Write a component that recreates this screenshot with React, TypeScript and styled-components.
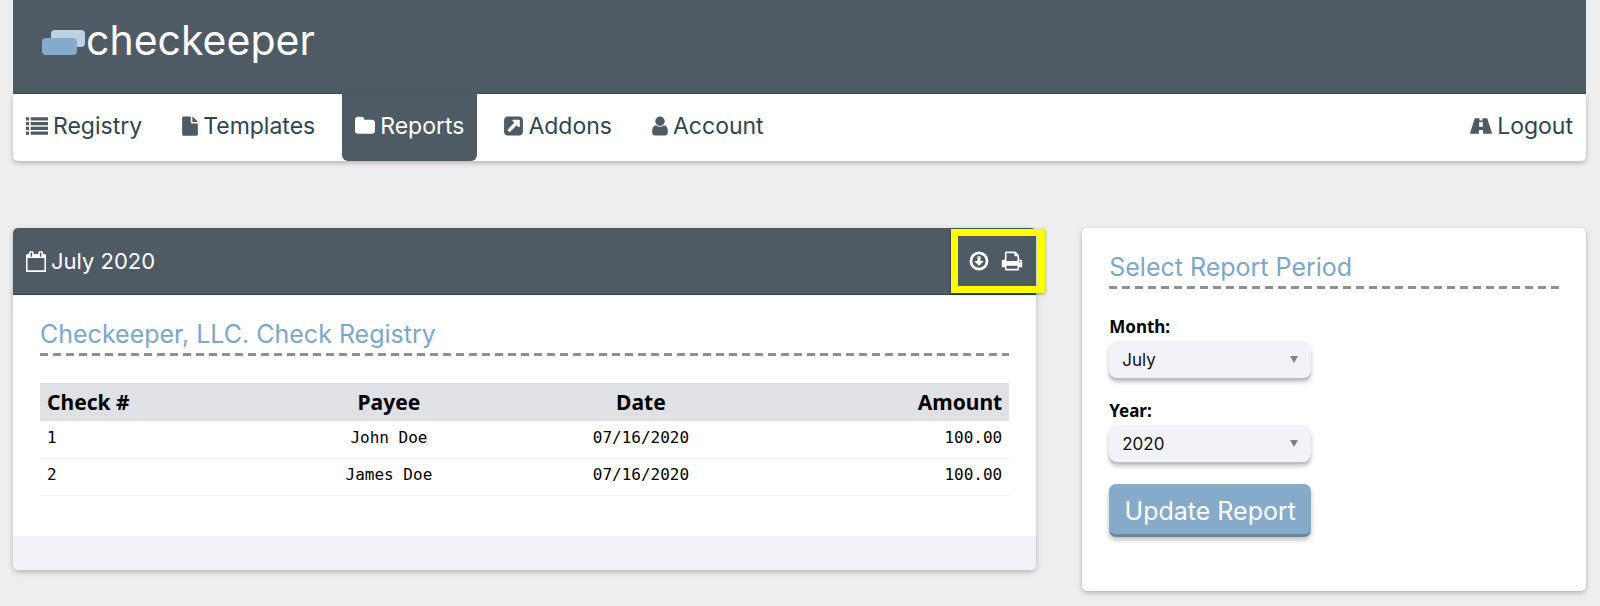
import React, { useState } from "react";
import styled, { createGlobalStyle } from "styled-components";

const slate = "#4e5a64";
const ink = "#2f4454";
const blue = "#86abca";
const display = `Inter, "Open Sans", sans-serif`;

const GlobalStyle = createGlobalStyle`
  *, *::before, *::after { box-sizing: border-box; }
  body {
    margin: 0;
    background: #eeeeee;
    color: #000;
    font-family: "Noto Sans", sans-serif;
  }
`;

const Page = styled.div`
  padding: 0 14px 12px 13px;
`;

const Masthead = styled.header`
  display: flex;
  align-items: center;
  height: 94px;
  padding: 0 29px 14px;
  background: ${slate};
  border-bottom: 1px solid #3b4d5b;
`;

const Brand = styled.a`
  display: flex;
  align-items: center;
  gap: 1px;
  color: #fff;
  font: 400 41px/52px ${display};
  text-decoration: none;

  svg { margin-top: 6px; }
`;

const Nav = styled.nav`
  display: flex;
  justify-content: space-between;
  height: 67px;
  background: #fff;
  border-radius: 0 0 5px 5px;
  box-shadow: 0 2px 5px rgba(0, 0, 0, 0.25);
`;

const NavGroup = styled.div`
  display: flex;
  gap: 14px;
`;

const NavLink = styled.a<{ $active?: boolean }>`
  display: flex;
  align-items: center;
  gap: 5px;
  padding: ${(p) => (p.$active ? "1px 13px 4px" : "0 13px 4px")};
  margin-top: ${(p) => (p.$active ? "-1px" : "0")};
  color: ${(p) => (p.$active ? "#fff" : ink)};
  background: ${(p) => (p.$active ? slate : "transparent")};
  border-radius: 0 0 6px 6px;
  font: 400 23px/28px ${display};
  text-decoration: none;

  svg { color: ${(p) => (p.$active ? "#fff" : slate)}; }
`;

const Columns = styled.main`
  display: grid;
  grid-template-columns: 65fr 32fr;
  column-gap: 46px;
  align-items: start;
  margin-top: 67px;
`;

const Card = styled.section`
  background: #fff;
  border-radius: 5px;
  box-shadow: 0 2px 5px rgba(0, 0, 0, 0.25);
`;

const CardHeader = styled.div`
  position: relative;
  display: flex;
  align-items: center;
  justify-content: space-between;
  height: 67px;
  padding: 0 13px;
  color: #fff;
  background: ${slate};
  border-bottom: 1px solid #2b4355;
  border-radius: 5px 5px 0 0;
`;

const CardTitle = styled.h1`
  display: flex;
  align-items: center;
  gap: 5px;
  margin: 0;
  font: 400 22px/28px ${display};
`;

const Actions = styled.div`
  display: flex;
  gap: 11px;
`;

const IconButton = styled.button`
  display: flex;
  padding: 0;
  border: 0;
  background: none;
  color: #fff;
  cursor: pointer;
`;

const Highlight = styled.div`
  position: absolute;
  top: 1px;
  right: -9px;
  width: 94px;
  height: 64px;
  border: 7px solid #ffff00;
  box-shadow: 0 1px 3px rgba(0, 0, 0, 0.4);
  pointer-events: none;
`;

const CardBody = styled.div<{ $end?: number }>`
  padding: 24px 27px ${(p) => p.$end ?? 40}px;
`;

const SectionTitle = styled.h2`
  margin: 0 0 27px;
  padding-bottom: 7px;
  color: #7ba7cb;
  font: 400 25px/30px ${display};
  background: repeating-linear-gradient(90deg, #8f8f8f 0 8px, transparent 8px 13px) bottom / 100% 3px no-repeat;
`;

const Table = styled.table`
  width: 100%;
  table-layout: fixed;
  border-collapse: collapse;
`;

const HeadCell = styled.th<{ $align: string }>`
  height: 38px;
  padding: 0 7px;
  background: #e0e1e5;
  font: 700 21px/28px "Noto Sans", sans-serif;
  text-align: ${(p) => p.$align};
`;

const Cell = styled.td<{ $align: string }>`
  height: 37px;
  padding: 0 7px 3px;
  border-bottom: 1px solid #eef0f3;
  font: 400 16px/20px "DejaVu Sans Mono", monospace;
  text-align: ${(p) => p.$align};
`;

const CardFooter = styled.div`
  height: 34px;
  background: #f2f3f8;
  border-radius: 0 0 5px 5px;
`;

const Form = styled.form`
  display: flex;
  flex-direction: column;
  align-items: flex-start;
`;

const Field = styled.div`
  display: flex;
  flex-direction: column;
  gap: 4px;
  width: 202px;
  margin-bottom: 22px;
`;

const Label = styled.label`
  font: 700 17px/21px "Noto Sans", sans-serif;
`;

const SelectBox = styled.div`
  display: grid;
  align-items: center;

  > * { grid-area: 1 / 1; }
  svg { justify-self: end; margin-right: 13px; pointer-events: none; }
`;

const Select = styled.select`
  appearance: none;
  width: 100%;
  height: 37px;
  padding: 0 13px;
  border: 0;
  border-radius: 8px;
  background: #f2f3f8;
  color: #111;
  box-shadow: 0 2px 0 #bdbfc2, 0 4px 4px rgba(0, 0, 0, 0.25);
  font: 400 17px/24px ${display};
`;

const SubmitButton = styled.button`
  width: 202px;
  height: 53px;
  padding: 3px 0 0;
  border: 0;
  border-bottom: 3px solid #68879f;
  border-radius: 7px;
  background: ${blue};
  color: #fff;
  box-shadow: 0 3px 5px rgba(0, 0, 0, 0.25);
  font: 400 25px/30px ${display};
  cursor: pointer;
`;

const iconPaths = {
  list: "M0 192h256v256H0zM384 192h1408v256H384zM0 576h256v256H0zM384 576h1408v256H384zM0 960h256v256H0zM384 960h1408v256H384zM0 1344h256v256H0zM384 1344h1408v256H384z",
  file: "M0 208q0-40 28-68t68-28h608v480q0 40 28 68t68 28h480v896q0 40-28 68t-68 28H96q-40 0-68-28t-28-68zM832 112q26 8 46 28l346 346q36 36 46 74H832z",
  folder: "M1728 608v704q0 92-66 158t-158 66h-1216q-92 0-158-66t-66-158v-960q0-92 66-158t158-66h320q92 0 158 66t66 158v32h672q92 0 158 66t66 158z",
  external: "M1408 928v-480q0-26-19-45t-45-19h-480q-42 0-59 39-17 41 14 70l144 144-534 534q-19 19-19 45t19 45l102 102q19 19 45 19t45-19l534-534 144 144q18 19 45 19 12 0 25-5 39-17 39-59zm256-512v960q0 119-84.5 203.5t-203.5 84.5h-960q-119 0-203.5-84.5t-84.5-203.5v-960q0-119 84.5-203.5t203.5-84.5h960q119 0 203.5 84.5t84.5 203.5z",
  user: "M1536 1399q0 109-62.5 187t-150.5 78h-854q-88 0-150.5-78t-62.5-187q0-85 8.5-160.5t31.5-152 58.5-131 94-89 134.5-34.5q131 128 313 128t313-128q76 0 134.5 34.5t94 89 58.5 131 31.5 152 8.5 160.5zm-256-887q0 159-112.5 271.5t-271.5 112.5-271.5-112.5-112.5-271.5 112.5-271.5 271.5-112.5 271.5 112.5 112.5 271.5z",
  road: "M420 256H780L768 448H1024L1012 256H1372Q1400 256 1412 285L1780 1440Q1800 1536 1740 1536H1080L1060 1216H732L712 1536H52Q-8 1536 12 1440L380 285Q392 256 420 256zM758 576L740 960H1052L1034 576z",
  calendar: "M192 1664h1408v-1024h-1408v1024zm384-1152v-288q0-14-9-23t-23-9h-64q-14 0-23 9t-9 23v288q0 14 9 23t23 9h64q14 0 23-9t9-23zm768 0v-288q0-14-9-23t-23-9h-64q-14 0-23 9t-9 23v288q0 14 9 23t23 9h64q14 0 23-9t9-23zm384-64v1280q0 52-38 90t-90 38h-1408q-52 0-90-38t-38-90v-1280q0-52 38-90t90-38h128v-96q0-66 47-113t113-47h64q66 0 113 47t47 113v96h384v-96q0-66 47-113t113-47h64q66 0 113 47t47 113v96h128q52 0 90 38t38 90z",
  download: "M896 128a768 768 0 1 0 0 1536a768 768 0 1 0 0-1536zm0 224a544 544 0 1 1 0 1088a544 544 0 1 1 0-1088zM800 512q-32 0-32 32v352H576q-22 0-30 20-8 19 7 35l320 320q10 9 23 9t23-9l320-320q15-16 7-35-8-20-30-20h-192V544q0-32-32-32z",
  print: "M448 1536h896v-256h-896v256zm0-640h896v-384h-160q-40 0-68-28t-28-68v-160h-640v640zm1152 64q0-26-19-45t-45-19-45 19-19 45 19 45 45 19 45-19 19-45zm128 0v416q0 13-9.5 22.5t-22.5 9.5h-224v160q0 40-28 68t-68 28h-960q-40 0-68-28t-28-68v-160h-224q-13 0-22.5-9.5t-9.5-22.5v-416q0-79 56.5-135.5t135.5-56.5h64v-544q0-40 28-68t68-28h672q40 0 88 20t76 48l152 152q28 28 48 76t20 88v256h64q79 0 135.5 56.5t56.5 135.5z",
};

// Glyphs share a 1792-unit em; `x` and `w` crop each one to its own advance width.
function Icon({ name, x = 0, w = 1792, size = 22 }: { name: keyof typeof iconPaths; x?: number; w?: number; size?: number }) {
  return (
    <svg width={Math.round((w * size) / 1792)} height={size} viewBox={`${x} 0 ${w} 1792`} fill="currentColor" fillRule="evenodd" aria-hidden="true">
      <path d={iconPaths[name]} />
    </svg>
  );
}

function Arrow() {
  return (
    <svg width="8" height="7" viewBox="0 0 8 7" aria-hidden="true">
      <path d="M0 0h8L4 7z" fill="#808080" />
    </svg>
  );
}

const rows = [
  { check: "1", payee: "John Doe", date: "07/16/2020", amount: "100.00" },
  { check: "2", payee: "James Doe", date: "07/16/2020", amount: "100.00" },
];

const months = ["January", "February", "March", "April", "May", "June", "July", "August", "September", "October", "November", "December"];

const Col = styled.col<{ $width: string }>`
  width: ${(p) => p.$width};
`;

export default function App() {
  const [month, setMonth] = useState("July");
  const [year, setYear] = useState("2020");

  return (
    <>
      <GlobalStyle />
      <Page>
        <Masthead>
          <Brand href="#">
            <svg width="43" height="26" viewBox="0 0 43 26" aria-hidden="true">
              <rect x="9" y="0" width="34" height="17" rx="4" fill="#bcd2e2" />
              <rect x="0" y="8" width="35" height="17" rx="4" fill={blue} />
            </svg>
            checkeeper
          </Brand>
        </Masthead>
        <Nav>
          <NavGroup>
            <NavLink href="#"><Icon name="list" />Registry</NavLink>
            <NavLink href="#"><Icon name="file" w={1280} />Templates</NavLink>
            <NavLink href="#" $active><Icon name="folder" x={64} w={1664} />Reports</NavLink>
            <NavLink href="#"><Icon name="external" x={128} w={1536} />Addons</NavLink>
            <NavLink href="#"><Icon name="user" x={256} w={1280} />Account</NavLink>
          </NavGroup>
          <NavLink href="#"><Icon name="road" />Logout</NavLink>
        </Nav>
        <Columns>
          <Card>
            <CardHeader>
              <CardTitle><Icon name="calendar" x={64} w={1664} />July 2020</CardTitle>
              <Actions>
                <IconButton type="button" aria-label="Download"><Icon name="download" /></IconButton>
                <IconButton type="button" aria-label="Print"><Icon name="print" /></IconButton>
              </Actions>
              <Highlight />
            </CardHeader>
            <CardBody>
              <SectionTitle>Checkeeper, LLC. Check Registry</SectionTitle>
              <Table>
                <colgroup>
                  <Col $width="23%" />
                  <Col $width="26%" />
                  <Col $width="26%" />
                  <Col $width="25%" />
                </colgroup>
                <thead>
                  <tr>
                    <HeadCell $align="left">Check #</HeadCell>
                    <HeadCell $align="center">Payee</HeadCell>
                    <HeadCell $align="center">Date</HeadCell>
                    <HeadCell $align="right">Amount</HeadCell>
                  </tr>
                </thead>
                <tbody>
                  {rows.map((r) => (
                    <tr key={r.check}>
                      <Cell $align="left">{r.check}</Cell>
                      <Cell $align="center">{r.payee}</Cell>
                      <Cell $align="center">{r.date}</Cell>
                      <Cell $align="right">{r.amount}</Cell>
                    </tr>
                  ))}
                </tbody>
              </Table>
            </CardBody>
            <CardFooter />
          </Card>
          <Card>
            <CardBody $end={54}>
              <SectionTitle>Select Report Period</SectionTitle>
              <Form onSubmit={(e) => e.preventDefault()}>
                <Field>
                  <Label htmlFor="month">Month:</Label>
                  <SelectBox>
                    <Select id="month" value={month} onChange={(e) => setMonth(e.target.value)}>
                      {months.map((m) => <option key={m}>{m}</option>)}
                    </Select>
                    <Arrow />
                  </SelectBox>
                </Field>
                <Field>
                  <Label htmlFor="year">Year:</Label>
                  <SelectBox>
                    <Select id="year" value={year} onChange={(e) => setYear(e.target.value)}>
                      <option>2019</option>
                      <option>2020</option>
                    </Select>
                    <Arrow />
                  </SelectBox>
                </Field>
                <SubmitButton type="submit">Update Report</SubmitButton>
              </Form>
            </CardBody>
          </Card>
        </Columns>
      </Page>
    </>
  );
}
